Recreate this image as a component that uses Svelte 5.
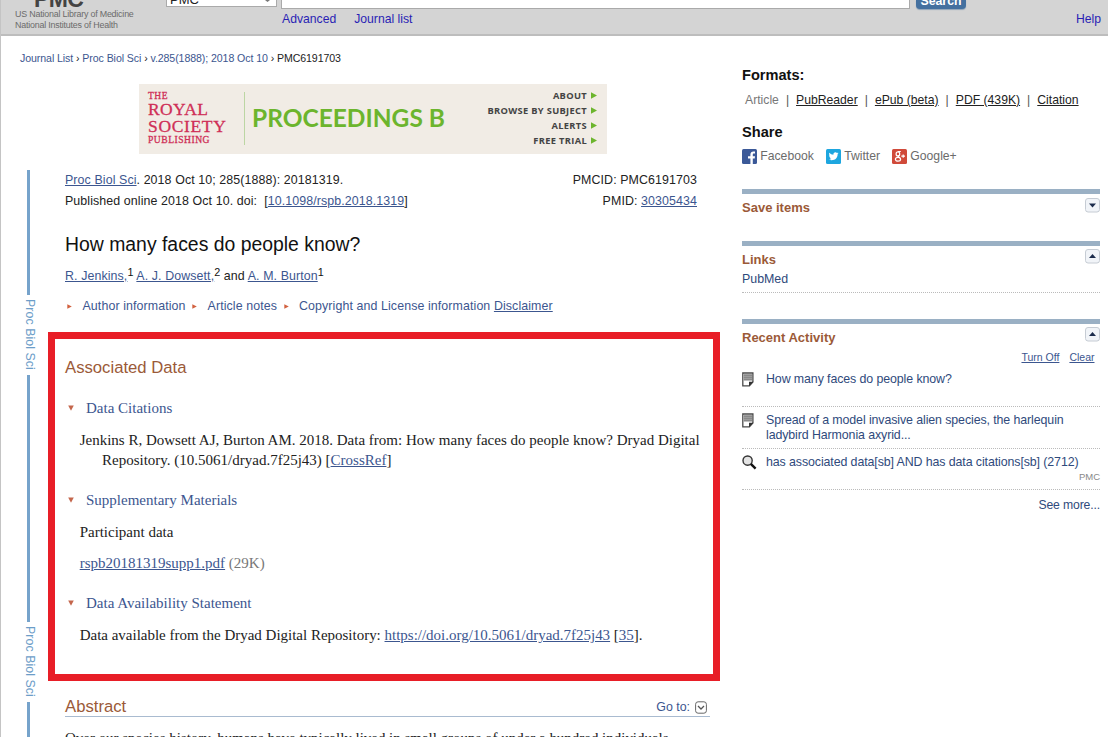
<script>
  const formats = ['PubReader', 'ePub (beta)', 'PDF (439K)', 'Citation'];
  const bannerLinks = ['ABOUT', 'BROWSE BY SUBJECT', 'ALERTS', 'FREE TRIAL'];
</script>

{#snippet toggle(up)}
  <svg class="toggle" width="15" height="15" viewBox="0 0 15 15">
    <rect x="0.5" y="0.5" width="14" height="13.5" rx="2.5" fill="#f1f4f8" stroke="#c6ccd4" />
    {#if up}
      <path d="M4 9 L7.5 5 L11 9 Z" fill="#1c2c4c" />
    {:else}
      <path d="M4 5.6 L11 5.6 L7.5 9.6 Z" fill="#1c2c4c" />
    {/if}
  </svg>
{/snippet}

{#snippet doc()}
  <svg class="doc" width="13" height="15" viewBox="0 0 13 15">
    <path d="M0.8 1 H10.9 V10 L7.4 13.8 H0.8 Z" fill="#fff" stroke="#4a4a4a" stroke-width="1.3" />
    <path d="M1.8 2 H10 V8.6 H1.8 Z" fill="#a0a0a0" />
    <path d="M1.8 3.6 H10 M1.8 5.6 H10 M1.8 7.6 H10" stroke="#7c7c7c" stroke-width="0.7" />
    <path d="M11.4 9.8 L7 14.3 V9.8 Z" fill="#333" />
  </svg>
{/snippet}

{#snippet right()}
  <svg class="tri" width="5" height="5" viewBox="0 0 5 5"><path d="M0.3 0.3 L4.8 2.5 L0.3 4.7 Z" fill="#d2613f" /></svg>
{/snippet}

{#snippet down()}
  <svg class="dtri" width="6" height="6" viewBox="0 0 6 6"><path d="M0.2 0.4 H5.8 L3 5.8 Z" fill="#c4664c" /></svg>
{/snippet}

<div class="page">
  <header>
    <div class="brand">
      <b>PMC</b>
      <span class="l1">US National Library of Medicine</span>
      <span class="l2">National Institutes of Health</span>
    </div>
    <div class="select"><span>PMC</span><i></i></div>
    <div class="search">
      <div class="field"></div>
      <nav><a class="adv" href="#a">Advanced</a><a class="jl" href="#j">Journal list</a></nav>
    </div>
    <div class="button"><span>Search</span></div>
    <a class="help" href="#h">Help</a>
  </header>

  <div class="body">
    <main>
      <div class="crumbs"><a href="#c">Journal List</a> › <a href="#c">Proc Biol Sci</a> › <a href="#c">v.285(1888); 2018 Oct 10</a> › <span>PMC6191703</span></div>

      <div class="banner">
        <div class="society">
          <span class="s1">THE</span>
          <span class="s2">ROYAL</span>
          <span class="s3">SOCIETY</span>
          <span class="s4">PUBLISHING</span>
        </div>
        <div class="proc">PROCEEDINGS B</div>
        <ul>
          {#each bannerLinks as link}
            <li>{link}<svg width="6" height="7" viewBox="0 0 6 7"><path d="M0 0.3 L6 3.5 L0 6.7 Z" fill="#6cb52d" /></svg></li>
          {/each}
        </ul>
      </div>

      <div class="columns">
        <div class="rail">
          <div class="bar b1"></div>
          <span class="side">Proc Biol Sci</span>
          <div class="bar b2"></div>
          <span class="side">Proc Biol Sci</span>
          <div class="bar b3"></div>
        </div>

        <article>
          <div class="cite"><span class="c1"><a href="#p">Proc Biol Sci</a>. 2018 Oct 10; 285(1888): 20181319.</span><span class="c2">PMCID: PMC6191703</span></div>
          <div class="cite"><span class="c3">Published online 2018 Oct 10. doi:&nbsp; [<a href="#d">10.1098/rspb.2018.1319</a>]</span><span class="c4">PMID: <a href="#i">30305434</a></span></div>
          <h1><span>How many faces do people know?</span></h1>
          <div class="authors"><a href="#1">R. Jenkins,</a><sup>1</sup> <a href="#2">A. J. Dowsett,</a><sup>2</sup> and <a href="#3">A. M. Burton</a><sup>1</sup></div>
          <div class="notes">
            {@render right()}<span class="n1">Author information</span>
            {@render right()}<span class="n2">Article notes</span>
            {@render right()}<span class="n3">Copyright and License information <a href="#l">Disclaimer</a></span>
          </div>

          <section class="data">
            <h2><span>Associated Data</span></h2>
            <h3>{@render down()}<span class="h31">Data Citations</span></h3>
            <div class="line top"><span class="d1">Jenkins R, Dowsett AJ, Burton AM. 2018. Data from: How many faces do people know? Dryad Digital</span></div>
            <div class="line indent"><span class="d2">Repository. (10.5061/dryad.7f25j43) [<a href="#x">CrossRef</a>]</span></div>
            <h3 class="second">{@render down()}<span class="h32">Supplementary Materials</span></h3>
            <div class="line top"><span class="d3">Participant data</span></div>
            <div class="line pdf"><span class="d4"><a href="#s">rspb20181319supp1.pdf</a> <em>(29K)</em></span></div>
            <h3 class="third">{@render down()}<span class="h33">Data Availability Statement</span></h3>
            <div class="line top"><span class="d5">Data available from the Dryad Digital Repository: <a href="#u">https://doi.org/10.5061/dryad.7f25j43</a> [<a href="#r">35</a>].</span></div>
          </section>

          <div class="abstract">
            <h2><span>Abstract</span></h2>
            <div class="goto">Go to:
              <svg width="12" height="13" viewBox="0 0 12 13"><rect x="0.6" y="0.8" width="10.8" height="11.4" rx="2.5" fill="#fff" stroke="#666" /><path d="M3 5 L6 8 L9 5" fill="none" stroke="#555" stroke-width="1.3" /></svg>
            </div>
          </div>
          <p><span>Over our species history, humans have typically lived in small groups of under a hundred individuals</span></p>
        </article>
      </div>
    </main>

    <aside>
      <h4 class="formats"><span>Formats:</span></h4>
      <div class="formatlist"><span>Article</span>{#each formats as f}<i>|</i><a href="#f">{f}</a>{/each}</div>
      <h4 class="share"><span>Share</span></h4>
      <div class="social">
        <svg width="15" height="15" viewBox="0 0 15 15"><rect width="15" height="15" rx="1.5" fill="#3b5998" /><path d="M8.4 15 V9.5 H6 V7.2 H8.4 V5.4 C8.4 3.3 9.6 2.4 11.4 2.4 H13 V4.6 H11.8 C11 4.6 10.8 5 10.8 5.7 V7.2 H13 L12.7 9.5 H10.8 V15 Z" fill="#fff" /></svg>
        <span class="fb">Facebook</span>
        <svg width="15" height="15" viewBox="0 0 15 15"><rect width="15" height="15" rx="1.5" fill="#1da6df" /><path d="M12.6 4.5 L11.6 5.3 C11.7 9.5 8.3 12.3 2.5 10.7 C3.7 10.7 4.8 10.4 5.4 9.9 C4.5 9.7 3.9 9.2 3.6 8.4 H4.5 C3.6 8 3 7.2 3 6.2 L3.9 6.4 C3 5.7 2.9 4.6 3.4 3.7 C4.4 4.9 5.7 5.6 7.4 5.7 C7.1 3.4 9.6 2.5 11 3.9 L12.3 3.5 L11.6 4.6 Z" fill="#fff" /></svg>
        <span class="tw">Twitter</span>
        <svg width="15" height="15" viewBox="0 0 15 15"><rect width="15" height="15" rx="1.5" fill="#d04a3a" /><g fill="none" stroke="#fff" stroke-width="1.2"><ellipse cx="5.9" cy="4.9" rx="1.8" ry="2" /><path d="M6 2.5 H8.8 M7 6.6 L6.2 7.6 L8 9" /><ellipse cx="6" cy="10.3" rx="2.6" ry="1.9" /><path d="M9.3 7.1 H13 M11.2 5.4 V8.8" /></g></svg>
        <span class="gp">Google+</span>
      </div>

      <section class="panel save">
        <h5><span>Save items</span></h5>{@render toggle(false)}
      </section>
      <section class="panel links">
        <h5><span>Links</span></h5>{@render toggle(true)}
      </section>
      <div class="pubmed"><a href="#m">PubMed</a></div>
      <section class="panel recent">
        <h5><span>Recent Activity</span></h5>{@render toggle(true)}
      </section>
      <div class="actions"><a class="off" href="#o">Turn Off</a><a class="clear" href="#k">Clear</a></div>
      <div class="item i1">{@render doc()}<div><span class="t1">How many faces do people know?</span></div></div>
      <div class="item i2">{@render doc()}<div><span class="t2">Spread of a model invasive alien species, the harlequin</span><span class="t3">ladybird Harmonia axyrid...</span></div></div>
      <div class="item i3">
        <svg class="doc" width="16" height="16" viewBox="0 0 16 16"><circle cx="5.6" cy="5.6" r="4.6" fill="#e4e4e4" stroke="#333" stroke-width="1.4" /><path d="M8.8 8.8 L13.6 13.6" stroke="#111" stroke-width="2.4" /></svg>
        <div><span class="t4">has associated data[sb] AND has data citations[sb] (2712)</span><small>PMC</small></div>
      </div>
      <div class="more"><span>See more...</span></div>
    </aside>
  </div>
</div>

<style>
  :global(body) { margin: 0; background: #fff; overflow: hidden; }
  * { box-sizing: border-box; }
  .page { width: 1108px; height: 737px; overflow: hidden; font-family: "Liberation Sans", Arial, sans-serif; font-size: 12.4px; color: #222; border-left: 1px solid #c4c4c4; background: #fff; }
  span, .page a { white-space: nowrap; }
  a { color: #3c568f; }
  h1, h2, h3, h4, h5, p, ul { margin: 0; padding: 0; font-weight: normal; }
  svg { display: block; flex: none; }

  header { height: 36px; background: #d4d4d4; border-bottom: 2px solid #bdbdbd; display: flex; overflow: hidden; }
  header a { color: #2a1fb5; text-decoration: none; font-size: 12.2px; line-height: 14px; }
  .brand { width: 165px; padding-left: 14px; display: flex; flex-direction: column; font-size: 8.9px; letter-spacing: -0.2px; color: #6b6b6b; }
  .brand b { height: 8px; line-height: 8px; margin: -5px 0 6px 19px; font-size: 23px; letter-spacing: -0.6px; color: #444; }
  .brand span { line-height: 11px; height: 11px; }
  .select { width: 111px; height: 7px; background: #fff; border: 1px solid #aaa; border-top: 0; display: flex; align-items: flex-end; overflow: hidden; }
  .select span { font-size: 13px; line-height: 13px; margin: 0 0 0 3px; color: #222; flex: 1; }
  .select i { width: 5px; height: 2px; background: #777; margin: 0 6px 4px 0; clip-path: polygon(0 0, 100% 0, 50% 100%); }
  .search { width: 629px; margin-left: 4px; }
  .field { height: 9px; background: #fff; border: 1px solid #aaa; border-top: 0; }
  nav { display: flex; gap: 18px; padding: 3px 0 0 1px; }
  .button { width: 50px; height: 9px; margin-left: 6px; background: #44709f; border-radius: 0 0 4px 4px; color: #fff; font-weight: bold; font-size: 12.3px; display: flex; justify-content: center; align-items: flex-end; overflow: hidden; box-shadow: 0 1px 1px #8fa3b8; }
  .button span { line-height: 14px; margin-bottom: 1.5px; }
  .help { margin: 12px 7px 0 auto; }

  .body { display: flex; justify-content: space-between; }
  main { width: 720px; }
  .crumbs { height: 47.5px; line-height: 44px; padding-left: 19px; font-size: 10.6px; letter-spacing: -0.085px; white-space: nowrap; }
  .crumbs a { text-decoration: none; }

  .banner { width: 468px; height: 70px; margin-left: 138px; background: #f1ece5; display: flex; }
  .society { width: 106px; margin: 8px 0; height: 53px; border-right: 1px solid #bcd6a3; padding-left: 9px; display: flex; flex-direction: column; color: #cf2f57; font-family: "Liberation Serif", serif; }
  .society span { display: block; -webkit-text-stroke: 0.3px #cf2f57; }
  .s1 { font-size: 9.5px; line-height: 9px; letter-spacing: 0.5px; }
  .s2 { font-size: 17.5px; line-height: 17px; letter-spacing: 0.4px; }
  .s3 { font-size: 17.5px; line-height: 17px; letter-spacing: 0.65px; }
  .s4 { font-size: 9.6px; line-height: 10px; letter-spacing: 0.5px; }
  .proc { font: 700 24.5px/68px Lato, sans-serif; color: #6cb52d; padding-left: 7px; white-space: nowrap; width: 205px; }
  ul { list-style: none; flex: 1; padding: 4px 10px 0 0; }
  li { display: flex; justify-content: flex-end; align-items: center; gap: 4px; height: 15px; font: bold 9.3px/15px "Open Sans", sans-serif; letter-spacing: 0.33px; color: #444; white-space: nowrap; }

  .columns { display: flex; margin-top: 16.5px; }
  .rail { width: 64px; padding-left: 20px; display: flex; flex-direction: column; color: #6c9dc8; }
  .bar { width: 3px; margin-left: 6px; background: #76a3cb; }
  .b1 { height: 125px; }
  .b2 { height: 247px; }
  .b3 { height: 40px; }
  .side { writing-mode: vertical-rl; font-size: 12.4px; letter-spacing: 0.05px; line-height: 17px; width: 17px; height: 80px; padding-top: 4px; }
  article { width: 645px; }
  .cite { height: 20.5px; line-height: 20.5px; display: flex; justify-content: space-between; padding-right: 13px; letter-spacing: 0.1px; }
  h1 { height: 67px; line-height: 67px; font-size: 19.4px; color: #111; }
  .authors { height: 24px; line-height: 24px; margin-top: -14px; white-space: nowrap; letter-spacing: 0.1px; }
  sup { font-size: 10.8px; line-height: 0; vertical-align: 4px; color: #111; }
  .notes { height: 36px; display: flex; align-items: center; padding-left: 2px; color: #3c568f; letter-spacing: 0.1px; }
  .notes span { margin: 0 6.5px 0 10.5px; }

  .data { width: 672px; height: 349px; margin: 8px 0 0 -17px; border: 7px solid #e81e27; padding: 17px 0 0 10px; }
  h2 { color: #9b5a38; font-size: 16.7px; line-height: 24px; height: 24px; }
  .data h2 { margin-bottom: 18px; }
  h3 { font: 15px/20px "Liberation Serif", serif; height: 20px; color: #3c568f; display: flex; align-items: center; padding-left: 3px; gap: 12px; }
  h3.second { margin-top: 20px; }
  h3.third { margin-top: 20px; }
  .line { font: 15px/20px "Liberation Serif", serif; height: 20px; padding-left: 14.7px; }
  .top { margin-top: 12px; }
  .line.indent { padding-left: 37px; }
  .d5 { letter-spacing: -0.01px; }
  .pdf { margin-top: 11px; }
  em { font-style: normal; color: #777; }
  .abstract { display: flex; justify-content: space-between; align-items: center; height: 22px; margin-top: 13.5px; border-bottom: 1px solid #a9bbd0; padding: 4px 3px 0 0; }
  .goto { display: flex; gap: 5px; align-items: center; color: #3c568f; }
  p { font: 15px/20px "Liberation Serif", serif; margin-top: 11px; letter-spacing: -0.02px; }

  aside { width: 366px; padding-right: 8px; }
  h4 { font-weight: bold; color: #111; font-size: 14.6px; line-height: 20px; height: 20px; }
  .formats { margin-top: 29px; }
  .formatlist { display: flex; gap: 7px; height: 18px; line-height: 18px; margin-top: 6px; padding-left: 3px; color: #777; font-size: 12.2px; }
  .formatlist i { font-style: normal; color: #555; }
  .formatlist a { color: #222; }
  .share { margin-top: 13px; }
  .social { display: flex; align-items: center; height: 16px; margin-top: 6px; color: #6b6b6b; font-size: 12.2px; }
  .social span { margin: 0 12px 0 3.3px; }
  .panel { border-top: 5px solid #9ab0c4; display: flex; justify-content: space-between; }
  h5 { color: #9b5a38; font-weight: bold; font-size: 13px; line-height: 18px; margin-top: 5px; }
  .toggle { margin-top: 4px; }
  .save { margin-top: 25px; height: 52px; }
  .links { height: 31px; }
  .links .toggle { margin-top: 3px; }
  .pubmed { height: 21px; line-height: 14px; border-bottom: 1px dotted #bbb; }
  .pubmed a, .item, .more { text-decoration: none; color: #2f4a7c; }
  .recent { margin-top: 26px; height: 30px; }
  .recent .toggle { margin-top: 3px; }
  .actions { display: flex; justify-content: flex-end; gap: 10px; font-size: 10.5px; line-height: 16px; height: 16px; padding-right: 5.5px; }
  .item { display: flex; border-bottom: 1px dotted #bbb; line-height: 15px; letter-spacing: -0.1px; }
  .item > div { display: flex; flex-direction: column; flex: 1; }
  .item .doc { margin-right: 11px; }
  .item .doc[width="16"] { margin-right: 8px; }
  .i1 { height: 42px; padding-top: 7px; }
  .i2 { height: 42px; padding-top: 6px; }
  .i3 { height: 41px; padding-top: 6px; }
  small { text-align: right; font-size: 9.5px; line-height: 13px; color: #888; letter-spacing: 0; }
  .more { text-align: right; line-height: 31px; font-size: 12.2px; letter-spacing: -0.13px; }
</style>
